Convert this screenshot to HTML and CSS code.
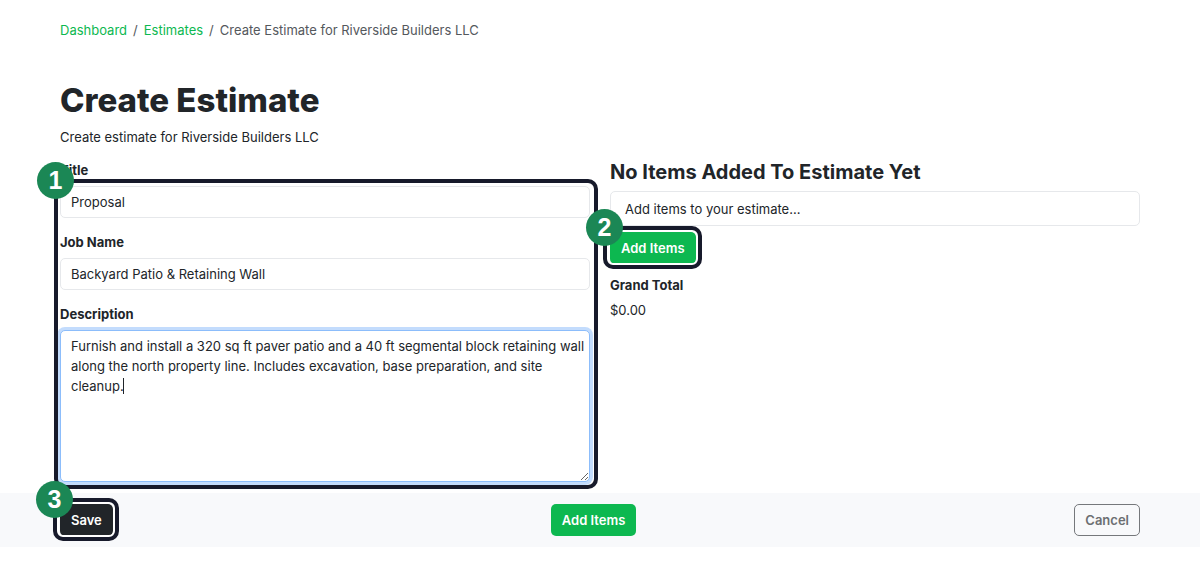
FILE: index.html
```html
<!DOCTYPE html>
<html lang="en">
<head>
<meta charset="utf-8">
<meta name="viewport" content="width=device-width, initial-scale=1">
<title>Create Estimate</title>
<link rel="stylesheet" href="styles.css">
</head>
<body>
<main class="page">
  <nav aria-label="Breadcrumb">
    <ol class="breadcrumb">
      <li><a href="#">Dashboard</a></li>
      <li><a href="#">Estimates</a></li>
      <li>Create Estimate for Riverside Builders LLC</li>
    </ol>
  </nav>
  <h1 class="title">Create Estimate</h1>
  <p class="subtitle">Create estimate for Riverside Builders LLC</p>
  <div class="columns">
    <form class="fields" id="estimate">
      <label class="label" for="title">Title</label>
      <input class="control" id="title" type="text" value="Proposal">
      <label class="label" for="job">Job Name</label>
      <input class="control" id="job" type="text" value="Backyard Patio &amp; Retaining Wall">
      <label class="label" for="description">Description</label>
      <div class="editor">
        <textarea class="control control-area" id="description">Furnish and install a 320 sq ft paver patio and a 40 ft segmental block retaining wall along the north property line. Includes excavation, base preparation, and site cleanup.</textarea>
        <span class="caret"></span>
      </div>
      <span class="frame frame-fields"></span>
      <span class="step step-fields">1</span>
    </form>
    <section class="summary">
      <h2 class="summary-title">No Items Added To Estimate Yet</h2>
      <p class="notice">Add items to your estimate...</p>
      <div class="marked">
        <button class="button button-green" type="button">Add Items</button>
        <span class="frame frame-button"></span>
        <span class="step step-button">2</span>
      </div>
      <h3 class="total-label">Grand Total</h3>
      <p class="total">$0.00</p>
    </section>
  </div>
</main>
<footer class="actions">
  <div class="marked">
    <button class="button button-dark" type="submit" form="estimate">Save</button>
    <span class="frame frame-button"></span>
    <span class="step step-button">3</span>
  </div>
  <button class="button button-green" type="button">Add Items</button>
  <button class="button button-outline" type="button">Cancel</button>
</footer>
</body>
</html>
```
FILE: styles.css
```css
* { box-sizing: border-box; }
body {
  margin: 0;
  background: #fff;
  color: #212529;
  font: 13px/20px Inter, "Liberation Sans", sans-serif;
}
h1, h2, h3, p { margin: 0; }
.page { padding: 20px 60px 0; }
.breadcrumb {
  display: flex;
  margin: 0;
  padding: 0;
  list-style: none;
  color: #54585c;
}
.breadcrumb li + li::before { content: "/"; padding: 0 6px; }
.breadcrumb a { color: #0db850; text-decoration: none; }
.title { margin-top: 40px; font-size: 33px; line-height: 40px; font-weight: 800; }
.subtitle { margin-top: 7px; }
.columns {
  display: grid;
  grid-template-columns: 1fr 1fr;
  gap: 20px;
  margin-top: 13px;
}
.fields { position: relative; display: flex; flex-direction: column; }
.label { margin-bottom: 6px; font-weight: 700; }
.control {
  display: block;
  width: 100%;
  height: 32px;
  margin: 0 0 14px;
  padding: 5px 10px;
  border: 1px solid #e6e8eb;
  border-radius: 5px;
  outline: 0;
  background: #fff;
  color: inherit;
  font: inherit;
}
.editor { position: relative; }
.control-area {
  height: 152px;
  margin: 0;
  padding-right: 2px;
  border-color: #8cbdfb;
  box-shadow: 0 0 0 3px #c3dcfd;
  resize: vertical;
}
.caret {
  position: absolute;
  left: 63px;
  top: 48px;
  width: 1px;
  height: 16px;
  background: #212529;
}
.frame {
  position: absolute;
  border: 4px solid #171a2b;
  border-radius: 10px;
  pointer-events: none;
}
.frame-fields { inset: 19px -8px -7px -6px; }
.frame-button {
  inset: -6px -6px -5px -7px;
  box-shadow: inset 0 0 0 2px #fff;
}
.marked { position: relative; }
.step {
  position: absolute;
  width: 37px;
  height: 37px;
  border-radius: 50%;
  background: #1b8755;
  color: #fff;
  font: bold 25px/37px "Liberation Sans", Arial, sans-serif;
  text-align: center;
}
.step-fields { left: -23px; top: 2px; }
.step-button { left: -24px; top: -23px; }
.summary { display: flex; flex-direction: column; align-items: flex-start; }
.summary-title { font-size: 20px; line-height: 24px; font-weight: 700; }
.notice {
  width: 100%;
  margin: 7px 0 6px;
  padding: 7px 14px 6px;
  border: 1px solid #e6e8eb;
  border-radius: 5px;
}
.button {
  display: block;
  height: 32px;
  padding: 0 10px;
  border: 1px solid transparent;
  border-radius: 5px;
  font: 600 13px/20px Inter, "Liberation Sans", sans-serif;
}
.button-green { background: #0db850; color: #fff; }
.button-dark { background: #212529; color: #fff; }
.button-outline { border-color: #75787b; background: transparent; color: #6c6f72; }
.total-label { margin-top: 11px; font-size: 13px; font-weight: 700; }
.total { margin-top: 5px; }
.actions {
  display: flex;
  align-items: center;
  justify-content: space-between;
  margin-top: 11px;
  padding: 11px 60px;
  background: #f8f9fb;
}
```
